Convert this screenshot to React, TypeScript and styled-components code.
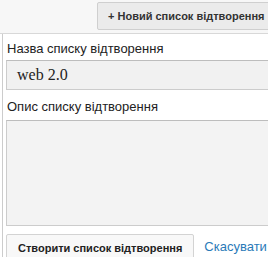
import styled, { createGlobalStyle } from "styled-components";

const Global = createGlobalStyle`
  html, body {
    margin: 0;
    padding: 0;
    background: #fff;
    font-family: "Liberation Sans", Arial, sans-serif;
    overflow: hidden;
  }
`;

const Page = styled.div`
  width: 268px;
  height: 257px;
  overflow: hidden;
`;

const TopBar = styled.div`
  height: 34px;
  background: #f7f7f7;
  border-bottom: 1px solid #d8d8d8;
  display: flex;
  align-items: center;
  padding-left: 97px;
  box-sizing: border-box;
`;

const NewButton = styled.button`
  height: 28px;
  margin-top: -1px;
  padding: 0 0 0 10px;
  width: 190px;
  flex-shrink: 0;
  text-align: left;
  white-space: nowrap;
  background: #ebebeb;
  border: 1px solid #cfcfcf;
  border-radius: 2px;
  color: #333;
  font-family: "Liberation Sans", Arial, sans-serif;
  font-size: 11px;
  font-weight: bold;
`;

const Panel = styled.div`
  margin-left: 2px;
  border-left: 1px solid #cccccc;
  padding: 7px 0 0 3px;
  display: flex;
  flex-direction: column;
`;

const Label = styled.div<{ $gap?: number }>`
  margin-top: ${(p) => p.$gap ?? 0}px;
  font-size: 13px;
  color: #222;
  line-height: 16px;
  padding-left: 1px;
`;

const TextInput = styled.div`
  margin-top: 3px;
  height: 30px;
  box-sizing: border-box;
  background: #f1f1f1;
  border: 1px solid #cccccc;
  border-top-color: #bdbdbd;
  border-right: none;
  padding-left: 10px;
  display: flex;
  align-items: center;
  font-family: "Liberation Serif", "Times New Roman", serif;
  font-size: 16px;
  color: #222;
`;

const TextArea = styled.div<{ $height: number }>`
  margin-top: 5px;
  height: ${(p) => p.$height}px;
  box-sizing: border-box;
  background: #f3f3f3;
  border: 1px solid #cccccc;
  border-top-color: #bdbdbd;
  border-right: none;
`;

const Actions = styled.div`
  margin-top: 8px;
  display: flex;
  align-items: flex-start;
  gap: 10px;
`;

const CreateButton = styled.button`
  height: 28px;
  padding: 0 11px;
  background: #f8f8f8;
  border: 1px solid #d3d3d3;
  border-radius: 2px;
  color: #222;
  font-family: "Liberation Sans", Arial, sans-serif;
  font-size: 11px;
  font-weight: bold;
  white-space: nowrap;
`;

const CancelLink = styled.a`
  margin-top: 5px;
  font-size: 13px;
  color: #2a7ab8;
  text-decoration: none;
  white-space: nowrap;
`;

export default function App() {
  return (
    <Page>
      <Global />
      <TopBar>
        <NewButton>+ Новий список відтворення</NewButton>
      </TopBar>
      <Panel>
        <Label>Назва списку відтворення</Label>
        <TextInput>web 2.0</TextInput>
        <Label $gap={9}>Опис списку відтворення</Label>
        <TextArea $height={106} />
        <Actions>
          <CreateButton>Створити список відтворення</CreateButton>
          <CancelLink href="#">Скасувати</CancelLink>
        </Actions>
      </Panel>
    </Page>
  );
}
